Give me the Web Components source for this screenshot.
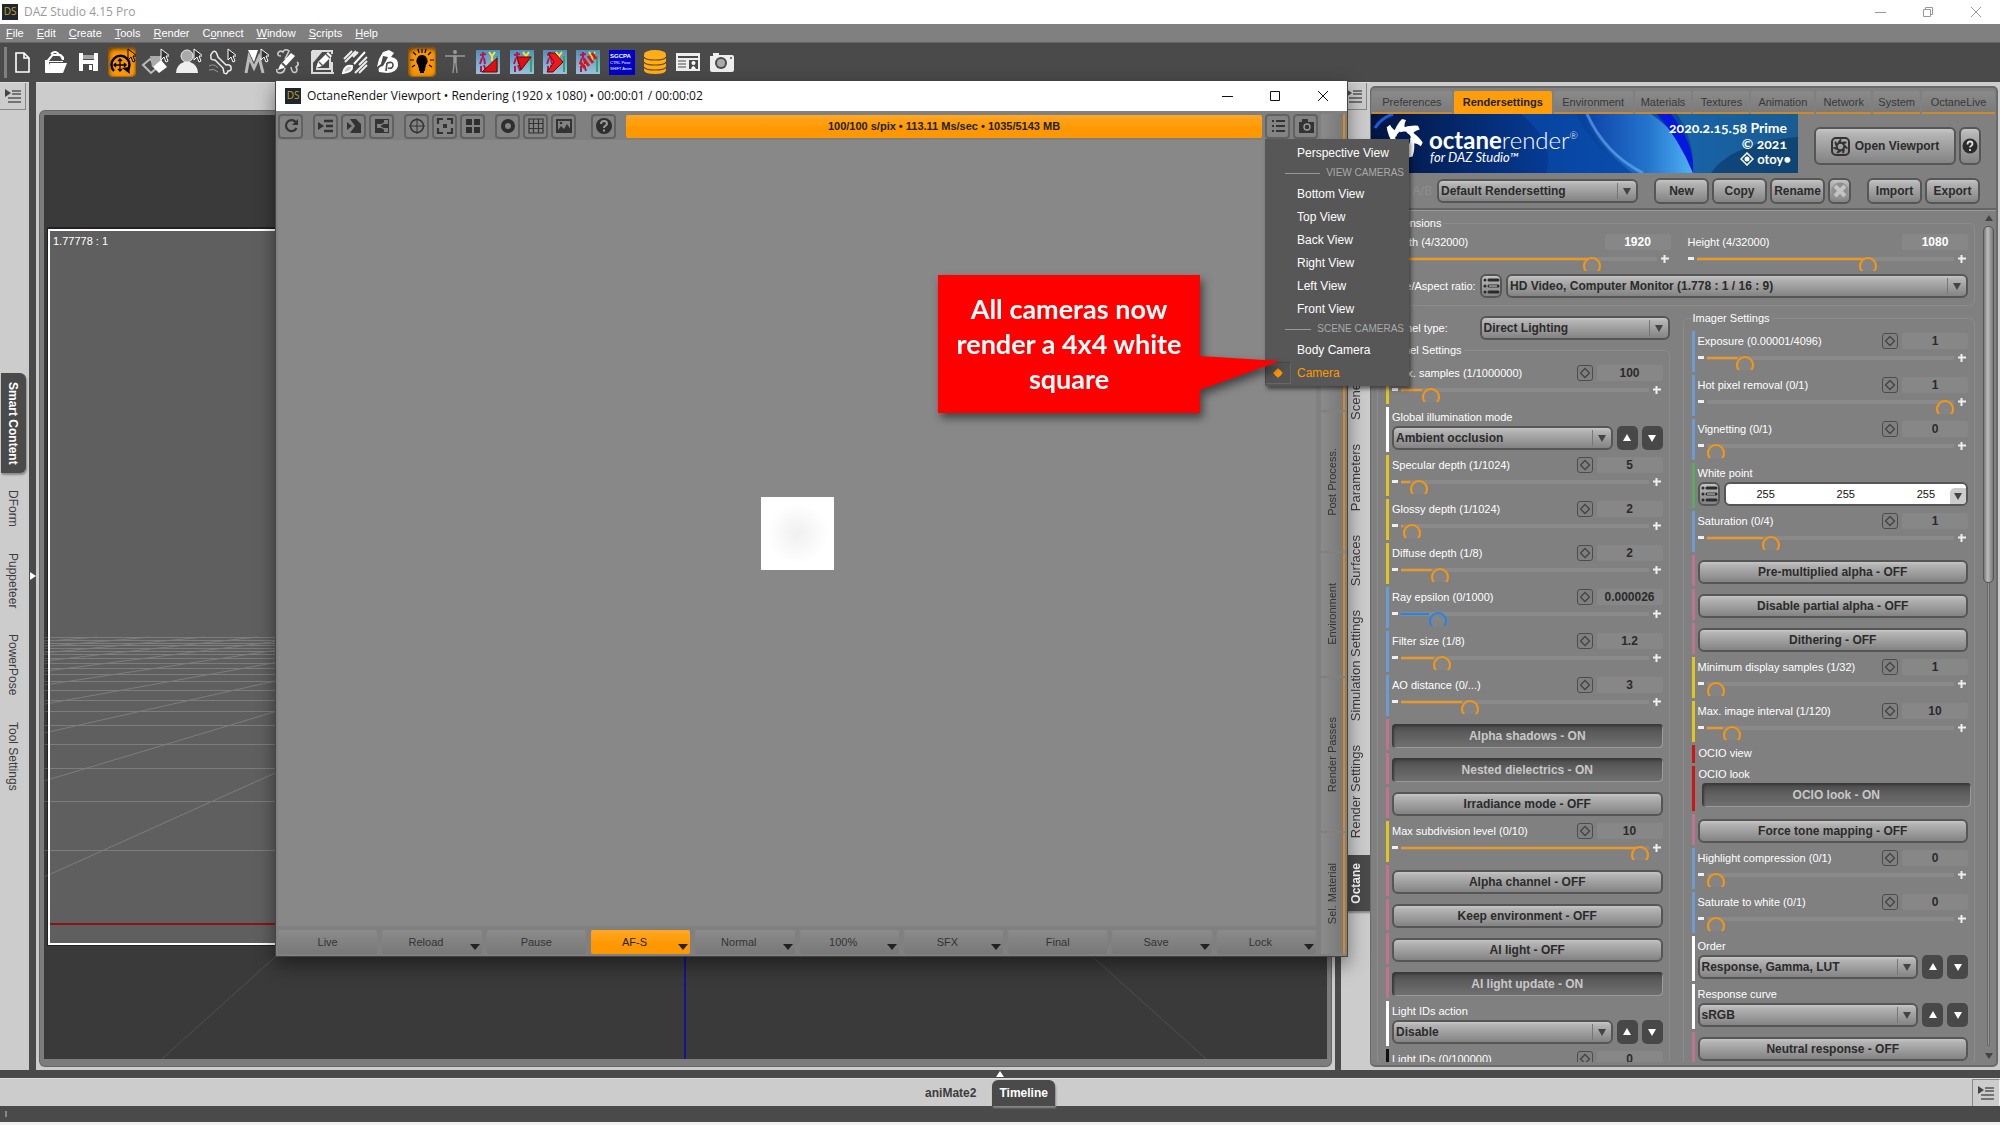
<!DOCTYPE html>
<html lang="en">
<head>
<meta charset="utf-8">
<title>DAZ Studio 4.15 Pro</title>
<style>
    html, body {
        height: 100%;
        margin: 0;
    }
    body {
        overflow: hidden;
        font-family: "Liberation Sans", Arial, sans-serif;
        font-size: 11px;
        line-height: 14px;
        color: #2b2b2b;
        background: #4a4a4a;
    }
</style>
</head>
<body>
<daz-studio></daz-studio>

<script>
// Shared rules, added to every shadow root
const BASE = `
    *, *::before, *::after { box-sizing: border-box; }
    :host([hidden]) { display: none; }
    button, input, select {
        font: inherit;
        color: inherit;
        margin: 0;
        padding: 0;
        border: 0;
        border-radius: 0;
        background: none;
        outline: none;
    }
    a { color: inherit; text-decoration: none; }
    svg { display: block; }
`;

// Raised and pressed button looks
const BUTTONS = `
    .raised {
        border: 2px solid #565656;
        border-radius: 6px;
        background: linear-gradient(#c6c6c6, #b4b4b4 15%, #838383);
        font-size: 12px;
        font-weight: bold;
        color: #2b2b2b;
    }
    .dark {
        border-radius: 5px;
        background: #484848;
        color: #fff;
    }
`;

function define(name, render, ready) {
    customElements.define(name, class extends HTMLElement {
        connectedCallback() {
            if (this.shadowRoot) return;
            this.attachShadow({ mode: 'open' });
            this.shadowRoot.innerHTML = '<style>' + BASE + '</style>' + render(this);
            if (ready) ready(this);
        }
    });
}

const svg = (w, h, body, extra = '') =>
    `<svg width="${w}" height="${h}" viewBox="0 0 ${w} ${h}" ${extra} aria-hidden="true">${body}</svg>`;

// ---------- Icons ----------

const CURSOR = '<path d="M20 1v11l3-3 2 5 2-1-2-5h4z" fill="#333" stroke="#fff" stroke-width="1"/>';
const POSE_BG = '<defs><linearGradient id="sky" x1="0" y1="0" x2="0" y2="1"><stop offset="0" stop-color="#4f8fb8"/><stop offset="1" stop-color="#9cc6df"/></linearGradient></defs><rect x="2" y="2" width="24" height="24" fill="url(#sky)"/><path d="M9 4v6M6 7l6-1M8 10l-2 6M10 10l1 6M7 18v6M10 17l2 6" stroke="#b3175a" stroke-width="2" fill="none"/><path d="M15 4l3 4 3-4M18 8v5" stroke="#f1e62a" stroke-width="2" fill="none"/><path d="M23 8v16" stroke="#2aa86a" stroke-width="2"/>';

const TOOL_ICONS = {
    'new': '<path d="M8 5h8l5 5v14H8z" fill="none" stroke="#fff" stroke-width="1.6"/><path d="M16 5v5h5" fill="none" stroke="#fff" stroke-width="1.6"/>',
    open: '<path d="M4 25V12h2l5-6h9l3 3v3h-2l-2-4h-7l-4 5v8z" fill="#fff"/><path d="M4 25l5-10h17l-4 10z" fill="#fff"/><path d="M10 6q5-5 9 2M8 14h14" stroke="#fff" stroke-width="2" fill="none"/><path d="M8 14.500h16" stroke="#4a4a4a"/>',
    save: '<path d="M5 5h19v18H5z" fill="#fff"/><path d="M9 5h11v7H9zM9 16h10v7H9z" fill="#4a4a4a"/><path d="M9 8h11M9 10h11" stroke="#fff"/><path d="M15 17h3v5h-3z" fill="#fff"/>',
    rotate: '<path d="M6 23A9 9 0 1 1 19 23" fill="none" stroke="#000" stroke-width="2.400"/><path d="M14 20l7-1 1 7z" fill="#000"/><path d="M12 12v10M7 17h10M10 13l2-2 2 2M10 21l2 2 2-2M8 15l-2 2 2 2M16 15l2 2-2 2" fill="none" stroke="#000" stroke-width="1.3"/><path d="M20 1v11l3-3 2 5 2-1-2-5h4z" fill="#f79400" stroke="#000"/>',
    surface: '<path d="M2 17l7-6 8 8-7 6z" fill="none" stroke="#bbb" stroke-width="2"/><path d="M9 8h11l2 11H11z" fill="#aaa"/><path d="M12 19l8-7 6 7-8 6z" fill="#fff"/>' + CURSOR,
    person: '<circle cx="13" cy="8" r="6" fill="#aaa" stroke="#eee"/><path d="M10 14h6q8 3 8 11H2q0-8 8-11z" fill="#eee"/>' + CURSOR,
    bone: '<path d="M4 5q3-4 5 1l1 3 8 8q4-1 5 2 1 4-3 4-1 4-4 2l-1-5-8-8q-5 0-4-3-1-2 1-4z" fill="none" stroke="#eee" stroke-width="1.5"/><path d="M1 18q5-3 9 2M1 22q5-2 9 2" fill="none" stroke="#999"/>' + CURSOR,
    joint: '<path d="M7 2h10l-4 12z" fill="#fff"/><path d="M5 25L8 9l5 11 5-11 4 16" fill="none" stroke="#bbb" stroke-width="3"/>' + CURSOR,
    geometry: '<path d="M7 8q-4 0-3-3 2-3 5-1 2-4 6-1l-4 8M3 21q-1 4 3 4t5-5M17 19q1 7 5 5 2-2 0-5 4-3 1-5" fill="none" stroke="#ccc" stroke-width="1.6"/><path d="M6 17L17 5l4 3-11 12-6 2z" fill="#fff"/><path d="M8 15l4 4" stroke="#555" stroke-width="2"/>',
    crop: '<path d="M4 3h20v3M4 3v22h22M8 21h14V9M24 14v12" fill="none" stroke="#ddd" stroke-width="2"/><path d="M8 20l2-6L20 4l4 4-10 10z" fill="#fff"/><path d="M4 3h11L4 16z" fill="#ddd"/><path d="M11 14l4 4M18 6l4 4" stroke="#555" stroke-width="1.400"/>',
    brush: '<path d="M3 11l8-8M4 14L15 3M12 9l5-5M18 25l8-8M14 25L26 13M18 17l8-8" stroke="#eee" stroke-width="2"/><path d="M13 16L24 4M2 25q2-9 9-7 1 6-9 7z" stroke="#fff" stroke-width="2" fill="#ccc"/>',
    power: '<path d="M9 4l6-2 5 3-3 4q8 1 7 9-2 7-11 7l-8-1q-2-5 4-6l3-5 2-4-5-1-2 8-4 3 2-8z" fill="#fff"/><path d="M13 15q6-2 6 2t-5 3M13 15l-1 8" fill="none" stroke="#4a4a4a" stroke-width="1.6"/>',
    light: '<path d="M14 7a6 6 0 0 0-4 10l1 4h6l1-4A6 6 0 0 0 14 7z" fill="#000"/><path d="M11 22h6M12 24h4" stroke="#000" stroke-width="2"/><path d="M14 5V1M8 7L5 4M20 7l3-3M6 12H2M22 12h4M7 17l-3 2M21 17l3 2M11 5l-1-4M17 5l1-4" stroke="#000" stroke-width="1.2"/>',
    figure: '<circle cx="14" cy="4" r="2" fill="#999"/><path d="M4 8h20M14 7v8M13 8v8l-1 9M15 8v8l1 9" stroke="#999" stroke-width="1.4" fill="none"/>',
    poseA: POSE_BG + '<path d="M23 10v14H8z" fill="#e01010" stroke="#700"/>',
    poseB: POSE_BG + '<path d="M9 9h14L13 22z" fill="#e01010" stroke="#700"/>',
    poseC: POSE_BG + '<path d="M7 5h7l8 9-10 10H6l7-10z" fill="#f01818" stroke="#700"/>',
    poseD: POSE_BG + '<path d="M6 14l5 6M10 11l5 7M14 8l5 7M18 5l4 6" stroke="#d81818" stroke-width="3"/>',
    stack: '<path d="M3 7v15q0 4 11 4t11-4V7z" fill="#ffae19"/><ellipse cx="14" cy="6" rx="11" ry="4" fill="#ffae19"/><path d="M3 9q1 3 11 3t11-3M3 14q1 3 11 3t11-3M3 19q1 3 11 3t11-3" fill="none" stroke="#6b4a10" stroke-width="1.2"/>',
    card: '<path d="M2 5h24v18H2z" fill="#eee"/><path d="M4 9h20" stroke="#4a4a4a" stroke-width="2"/><path d="M4 13h8M4 16h8M4 19h8" stroke="#4a4a4a"/><path d="M15 12h9v9h-9z" fill="#4a4a4a"/><circle cx="19.500" cy="15" r="2" fill="#fff"/><path d="M17 21q2-6 5 0z" fill="#fff"/>',
    camera: '<path d="M2 8h3V5h6v2h13q2 0 2 2v13q0 2-2 2H4q-2 0-2-2z" fill="#eee"/><circle cx="13" cy="15" r="6" fill="#4a4a4a"/><circle cx="13" cy="15" r="4" fill="#aaa"/><circle cx="23" cy="10" r="1" fill="#4a4a4a"/>'
};

const VIEW_ICONS = {
    reload: '<path d="M15 6.500A5.500 5.500 0 1 0 15.500 12" fill="none" stroke="#333" stroke-width="2.200"/><path d="M17 3v6h-6z" fill="#333"/>',
    indent: '<path d="M2 6l6 4-6 4z" fill="#333"/><path d="M8 5h9M10 10h7M8 15h9" stroke="#333" stroke-width="2.400"/>',
    tag: '<path d="M6 3h6l5 5v9H6l5-7z" fill="#333"/><path d="M3 6l5 4-5 4" fill="#333"/>',
    nodes: '<path d="M3 3h14v14H3z" fill="#333"/><path d="M14 6l-7 4 7 4" fill="none" stroke="#808080" stroke-width="1.400"/><path d="M12 4h4v4h-4zM12 12h4v4h-4zM5 8h4v4H5z" fill="#808080"/>',
    target: '<circle cx="10" cy="10" r="6.500" fill="none" stroke="#333" stroke-width="1.500"/><path d="M10 2v16M2 10h16" stroke="#333"/>',
    focus: '<path d="M8 3H3v5M12 3h5v5M3 12v5h5M17 12v5h-5" fill="none" stroke="#333" stroke-width="2.200"/><path d="M8 8h4v4H8z" fill="#333"/>',
    quad: '<path d="M3 3h6v6H3zM11 3h6v6h-6zM3 11h6v6H3zM11 11h6v6h-6z" fill="#2e2e2e"/>',
    ring: '<circle cx="10" cy="10" r="5" fill="none" stroke="#2e2e2e" stroke-width="4"/>',
    grid: '<path d="M3 3h14v14H3zM7.500 3v14M12.500 3v14M3 7.500h14M3 12.500h14" fill="none" stroke="#333" stroke-width="1.200"/>',
    image: '<path d="M3 4h14v12H3z" fill="none" stroke="#333" stroke-width="2"/><path d="M4 14l3-4 3 3 3-5 4 6v2H4z" fill="#333"/><circle cx="7" cy="7" r="1.300" fill="#333"/>',
    help: '<circle cx="10" cy="10" r="8" fill="#2e2e2e"/><path d="M7 8q0-3 3-3t3 3q0 1-2 2-1 1-1 2M10 13.500v2" fill="none" stroke="#999" stroke-width="2"/>',
    list: '<path d="M4 5h2M4 10h2M4 15h2M8 5h9M8 10h9M8 15h9" stroke="#333" stroke-width="2"/>',
    camera: '<path d="M3 6h3V3h6v3h6v11H3z" fill="#333"/><circle cx="11" cy="11" r="3" fill="none" stroke="#999" stroke-width="1.400"/>'
};

const PANE_MENU = svg(18, 18, '<path d="M1 2l6 4-6 4z" fill="#444"/><path d="M8 4h9M8 7h9M4 11h13M4 15h13" stroke="#555" stroke-width="1.400"/>');
const LIST = svg(18, 18, '<path d="M7 3h9M7 9h9M7 15h9" stroke="#2b2b2b" stroke-width="3" stroke-linecap="round"/><path d="M7 9h8" stroke="#ddd"/><circle cx="3" cy="3" r="1.500" fill="#2b2b2b"/><circle cx="3" cy="9" r="1.500" fill="#2b2b2b"/><circle cx="3" cy="15" r="1.500" fill="#2b2b2b"/>');
const UP = svg(10, 10, '<path d="M5 1l4 7H1z" fill="#fff"/>');
const DOWN = svg(10, 10, '<path d="M1 2h8L5 9z" fill="#fff"/>');

// Turbine mark: the same blade turned seven times round the hub
function turbine(size, fill) {
    let blades = '';
    for (let i = 0; i < 7; i++) {
        blades += `<path transform="rotate(${i * 360 / 7} 20 20)" d="M10 16Q13 6 19 0L23 1Q20 7 23 11Q15 11 13 18Z" fill="${fill}"/>`;
    }
    return `<svg width="${size}" height="${size}" viewBox="0 0 40 40" aria-hidden="true">${blades}</svg>`;
}

define('ds-logo', () => `
    <style>
        :host {
            display: block;
            width: 16px;
            height: 16px;
            flex: none;
            background: #1d2730;
            color: #c9a227;
            font: 10px/15px "Open Sans", sans-serif;
            text-align: center;
        }
    </style>DS`);

// ---------- Window captions ----------

define('window-caption', el => `
    <style>
        :host {
            display: flex;
            align-items: center;
            padding-left: 9px;
            background: #fff;
            color: #111;
            font: 12px/16px "Open Sans", sans-serif;
        }
        :host([main]) { padding-left: 2px; color: #999; }
        .title { flex: 1; margin-left: 6px; white-space: nowrap; }
        button { width: 48px; height: 22px; display: grid; place-items: center; }
    </style>
    <ds-logo></ds-logo>
    <span class="title"><slot></slot></span>
    <button aria-label="Minimize">${svg(12, 12, '<path d="M1 6.500h11" stroke="currentColor"/>')}</button>
    <button aria-label="Maximize">${svg(12, 12, el.hasAttribute('main')
        ? '<path d="M1.500 3.500h7v7h-7zM3.500 3V1.500h7v7H9" fill="none" stroke="currentColor"/>'
        : '<path d="M1.500 1.500h9v9h-9z" fill="none" stroke="currentColor"/>')}</button>
    <button aria-label="Close">${svg(12, 12, '<path d="M1 1l10 10M11 1L1 11" stroke="currentColor"/>')}</button>`);

// ---------- Menu bar and tool bar ----------

define('menu-bar', () => {
    const items = ['<u>F</u>ile', '<u>E</u>dit', '<u>C</u>reate', '<u>T</u>ools', '<u>R</u>ender',
        'C<u>o</u>nnect', '<u>W</u>indow', '<u>S</u>cripts', '<u>H</u>elp'];
    return `
    <style>
        :host { display: block; background: #808080; border-bottom: 1px solid #666; }
        nav { display: flex; gap: 13px; padding: 2px 6px; color: #fff; }
    </style>
    <nav>${items.map(i => `<a href="#">${i}</a>`).join('')}</nav>`;
});

define('tool-bar', () => {
    const names = ['new', 'open', 'save', 'rotate', 'surface', 'person', 'bone', 'joint', 'geometry', 'crop', 'brush',
        'power', 'light', 'figure', 'poseA', 'poseB', 'poseC', 'poseD', 'script', 'stack', 'card', 'camera'];
    const active = ['rotate', 'light'];
    let html = '';
    for (let i = 0; i < names.length; i += 3) {
        html += '<div class="group">' + names.slice(i, i + 3).map(n => `
            <button class="${active.includes(n) ? 'on' : ''}" aria-label="${n}">${n === 'script'
                ? '<span class="script"><b>SGCPA</b><br>CTRL Pose<br>SHIFT Anim</span>'
                : svg(28, 28, TOOL_ICONS[n])}</button>`).join('') + '</div>';
    }
    return `
    <style>
        :host {
            display: flex;
            align-items: center;
            gap: 6px;
            height: 39px;
            padding: 0 0 1px 4px;
            background: #4a4a4a;
        }
        .grip { width: 3px; height: 31px; margin-right: -5px; background: #808080; }
        .group { display: flex; gap: 5px; }
        button { width: 28px; height: 30px; display: grid; place-items: center; }
        .on {
            border-radius: 5px;
            background: #fa9600;
            box-shadow: inset 1px 2px 4px #5a3500, inset -1px -1px 1px #b97818;
        }
        .script {
            width: 26px;
            height: 25px;
            padding: 3px 0 0 1px;
            background: #0000c8;
            color: #fff;
            font-size: 4px;
            line-height: 6px;
            text-align: left;
            white-space: nowrap;
        }
        .script b { font-size: 6px; }
    </style>
    <div class="grip"></div>${html}`;
});

// ---------- Docking rails ----------

define('dock-rail', el => {
    const tabs = el.getAttribute('tabs').split('|');
    return `
    <style>
        :host {
            display: flex;
            flex-direction: column;
            align-items: center;
            background: #ccc;
            border-top: 1px solid #ddd;
            font-size: 12px;
            color: #3c3c3c;
        }
        .menu {
            width: 26px;
            height: 27px;
            display: grid;
            place-items: center;
            border-right: 1px solid #888;
            border-bottom: 1px solid #888;
            flex: none;
            align-self: flex-start;
        }
        .tabs { display: flex; flex-direction: column; gap: 8px; width: 100%; }
        .before { flex: 1; }
        .after { flex: 1; }
        :host([side="right"]) .before { flex: 5; }
        :host([side="right"]) .after { flex: 3; }
        .tabs button {
            display: flex;
            justify-content: center;
            width: 25px;
            padding: 9px 2px 9px 0;
            margin-left: 1px;
        }
        .tabs span { writing-mode: vertical-rl; white-space: nowrap; line-height: 16px; }
        .tabs .on { background: #4a4a4a; color: #fff; font-weight: bold; border-radius: 0 6px 6px 0; box-shadow: 1px 2px 2px #888; }
        :host([side="right"]) .tabs button { margin-left: 0; width: 100%; padding: 8px 0; font-size: 13px; }
        :host([side="right"]) .tabs span { transform: rotate(180deg); }
        :host([side="right"]) .tabs .on { border-radius: 6px 0 0 6px; font-size: 12px; }

        :host([side="left"]) .after { margin-bottom: 8px; }

        :host([side="bottom"]) { flex-direction: row-reverse; }
        :host([side="bottom"]) .menu { border: 1px solid #888; border-right-color: #eee; border-bottom: 0; align-self: center; width: 28px; }
        :host([side="bottom"]) .tabs { flex-direction: row; width: auto; align-self: flex-end; }
        :host([side="bottom"]) .tabs button { width: auto; height: 26px; padding: 5px 7px; font-size: 12px; font-weight: bold; }
        :host([side="bottom"]) .tabs span { writing-mode: horizontal-tb; }
        :host([side="bottom"]) .tabs .on { border-radius: 6px 6px 0 0; }
    </style>
    <button class="menu" aria-label="Pane options">${PANE_MENU}</button>
    <div class="before"></div>
    <div class="tabs">${tabs.map(t => `<button class="${t === el.getAttribute('active') ? 'on' : ''}"><span>${t}</span></button>`).join('')}</div>
    <div class="after"></div>`;
});

// ---------- Scene view ----------

define('scene-view', () => {
    // Perspective floor: lines meet at (640, 474), the far edge is at y 522
    const vx = 640, vy = 474, far = 522;
    let lines = '';
    for (let n = 1; n <= 16; n++) {
        const run = (far - vy) * n / 0.9;
        const reach = 640 * n / 0.9;
        lines += `<path d="M${vx - run} ${far}L${vx - reach} ${vy + 640}M${vx + run} ${far}L${vx + reach} ${vy + 640}"/>`;
    }
    [522, 525, 528, 530, 533, 536, 539, 543, 548, 553, 559, 566, 575, 585, 596, 610, 629, 653, 686, 735].forEach(y => {
        lines += `<path d="M0 ${y + 0.5}H1284"/>`;
    });
    return `
    <style>
        :host { display: block; padding: 28px 4px 4px; background: #ccc; border-top: 1px solid #ddd; min-width: 0; }
        .frame {
            height: 100%;
            border: 4px solid #7c7c7c;
            border-bottom-width: 7px;
            border-radius: 5px;
            background: #3a3a3a;
            overflow: hidden;
            position: relative;
            box-shadow: 0 0 0 1px #666;
        }
        .floor { position: absolute; inset: 0; }
        .ratio { position: absolute; left: 9px; top: 119px; color: #fff; }
    </style>
    <div class="frame">
        <svg class="floor" width="1284" height="945" viewBox="0 0 1284 945">
            <clipPath id="gate"><rect x="5" y="115" width="1270" height="714"/></clipPath>
            <rect x="3" y="112" width="1276" height="719" fill="#222"/>
            <g fill="none" stroke="#505050">${lines}</g>
            <rect x="5" y="115" width="1270" height="714" fill="#5f5f5f"/>
            <g fill="none" stroke="#7d7d7d" clip-path="url(#gate)">${lines}</g>
            <rect x="5" y="115" width="1270" height="714" fill="none" stroke="#fff" stroke-width="2"/>
            <path d="M6 809H1274" stroke="#8c1414" stroke-width="2"/>
            <path d="M641 809V945" stroke="#151590" stroke-width="2"/>
        </svg>
        <span class="ratio">1.77778 : 1</span>
    </div>`;
});

// ---------- Render viewport window ----------

define('camera-menu', () => `
    <style>
        :host {
            display: block;
            width: 144px;
            padding: 2px 0;
            background: #575757;
            box-shadow: 2px 3px 4px rgba(0, 0, 0, 0.5);
            color: #fff;
            font-size: 12px;
        }
        button { display: grid; grid-template-columns: 26px 1fr; column-gap: 6px; width: 100%; height: 23px; align-items: center; text-align: left; }
        .sep { display: flex; align-items: center; gap: 6px; padding: 0 5px 0 20px; height: 18px; font-size: 10px; color: #aaa; white-space: nowrap; }
        .sep::before { content: ""; flex: 1; height: 1px; background: #999; }
        .on { color: #ff9800; }
        .mark { height: 22px; display: grid; place-items: center; }
        .on .mark { border: 1px solid #484848; background: #535353; border-right-color: #666; border-bottom-color: #666; }
    </style>
    ${['Perspective View', '-VIEW CAMERAS', 'Bottom View', 'Top View', 'Back View', 'Right View', 'Left View', 'Front View',
        '-SCENE CAMERAS', 'Body Camera', 'Camera'].map(t => t[0] === '-'
        ? `<div class="sep">${t.slice(1)}</div>`
        : `<button class="${t === 'Camera' ? 'on' : ''}"><span class="mark">${t === 'Camera'
            ? svg(10, 10, '<path d="M5 0Q7 3 10 5Q7 7 5 10Q3 7 0 5Q3 3 5 0z" fill="#ff9800"/><circle cx="5" cy="5" r="3.500" fill="#ff9800"/>')
            : ''}</span>${t}</button>`).join('')}`);

define('call-out', () => `
    <style>
        :host { display: block; width: 262px; filter: drop-shadow(3px 5px 4px rgba(0, 0, 0, 0.5)); }
        .box {
            position: relative;
            display: grid;
            place-items: center;
            height: 138px;
            padding: 0 14px 2px;
            background: #f00;
            color: #fff;
            font: bold 27px/35px Lato, sans-serif;
            text-align: center;
        }
        svg { position: absolute; left: 100%; top: 81px; }
    </style>
    <div class="box"><span><slot></slot></span>${svg(80, 34, '<path d="M0 0L80 5L0 34z" fill="#f00"/>')}</div>`);

define('render-window', () => {
    const groups = [['reload'], ['indent', 'tag', 'nodes'], ['target', 'focus', 'quad'], ['ring', 'grid', 'image']];
    const button = n => `<button class="tool" aria-label="${n}">${svg(20, 20, VIEW_ICONS[n])}</button>`;
    const actions = ['Live', 'Reload*', 'Pause', 'AF-S*', 'Normal*', '100%*', 'SFX*', 'Final', 'Save*', 'Lock*'];
    return `
    <style>
        :host {
            display: flex;
            flex-direction: column;
            border: 1px solid #444;
            background: #808080;
            box-shadow: 0 8px 18px rgba(0, 0, 0, 0.45);
        }
        window-caption { height: 30px; flex: none; }
        .bar { display: flex; align-items: center; gap: 10px; padding: 1px 29px 0 2px; height: 29px; }
        .group { display: flex; gap: 3px; }
        .tool {
            width: 25px;
            height: 25px;
            display: grid;
            place-items: center;
            border: 2px solid #626262;
            border-radius: 4px;
            background: #838383;
        }
        .help { margin-left: 5px; }
        .progress {
            flex: 1;
            height: 23px;
            display: grid;
            place-items: center;
            border-radius: 2px;
            background: linear-gradient(#ffa726, #ff9800 60%);
            font-weight: bold;
            color: #222;
        }
        .end { margin-left: -7px; }
        .main { flex: 1; display: grid; grid-template-columns: 1fr 24px; gap: 5px; padding: 0 2px 2px; min-height: 0; }
        .left { display: flex; flex-direction: column; gap: 4px; }
        .render { flex: 1; display: grid; place-items: center; background: #888; }
        .square { width: 73px; height: 73px; background: radial-gradient(closest-side, #f0f0f0, #fff 85%); }
        .actions { display: grid; grid-template-columns: repeat(10, 1fr); gap: 5px; }
        .actions button {
            position: relative;
            height: 24px;
            border-radius: 2px;
            background: linear-gradient(#8b8b8b, #787878);
            color: #333;
        }
        .actions .on { background: linear-gradient(#ffa726, #ff9800 60%); color: #222; }
        .more::after {
            content: "";
            position: absolute;
            right: 2px;
            bottom: 4px;
            border: 5px solid transparent;
            border-top: 6px solid #222;
            border-bottom: 0;
        }
        .actions .more { padding-right: 12px; }
        .sidetabs { display: grid; grid-template-rows: 150fr 147fr 140fr 124fr 155fr 122fr; gap: 2px; margin-top: -26px; }
        .sidetabs button {
            display: grid;
            place-items: center;
            border-right: 2px solid #d68a1c;
            background: linear-gradient(90deg, #8b8b8b, #797979);
            color: #333;
        }
        .sidetabs span { writing-mode: vertical-rl; transform: rotate(180deg); }
        camera-menu { position: absolute; right: -62px; top: 58px; }
        call-out { position: absolute; right: 147px; top: 194px; }
    </style>
    <window-caption>OctaneRender Viewport • Rendering (1920 x 1080) • 00:00:01 / 00:00:02</window-caption>
    <div class="bar">
        ${groups.map(g => `<div class="group">${g.map(button).join('')}</div>`).join('')}
        <div class="group help">${button('help')}</div>
        <div class="progress">100/100 s/pix • 113.11 Ms/sec • 1035/5143 MB</div>
        <div class="group end">${button('list')}${button('camera')}</div>
    </div>
    <div class="main">
        <div class="left">
            <div class="render"><div class="square"></div></div>
            <div class="actions">${actions.map(a => `<button class="${a.endsWith('*') ? 'more' : ''} ${a === 'AF-S*' ? 'on' : ''}">${a.replace('*', '')}</button>`).join('')}</div>
        </div>
        <div class="sidetabs">${['', '', 'Post Process.', 'Environment', 'Render Passes', 'Sel. Material'].map(t => `<button><span>${t}</span></button>`).join('')}</div>
    </div>
    <camera-menu></camera-menu>
    <call-out>All cameras now render a 4x4 white square</call-out>`;
});

// ---------- Parameter rows ----------

define('param-slider', el => {
    const pos = Number(el.getAttribute('pos') || 0);
    const fill = el.hasAttribute('nofill') ? 0 : pos;
    return `
    <style>
        :host { display: block; height: 41px; border-left: 3px solid var(--bar, transparent); padding: 2px 0 0 3px; --knob: #f7960f; }
        :host([plain]) { border: 0; padding-left: 0; }
        :host([blue]) { --knob: #2284f0; }
        .top { display: flex; align-items: center; height: 16px; gap: 4px; }
        label { flex: 1; color: #fff; white-space: nowrap; }
        .diamond { width: 16px; height: 16px; border: 1px solid #4c4c4c; border-radius: 3px; display: grid; place-items: center; }
        :host([plain]) .diamond { display: none; }
        .value { width: 66px; height: 16px; border-radius: 2px; background: #878787; text-align: center; font-weight: bold; font-size: 12px; }
        :host([plain]) .value { color: #fff; }
        .line { display: flex; gap: 3px; margin-top: 7px; height: 14px; padding-right: 2px; }
        .step { width: 6px; height: 10px; margin-top: -4px; flex: none; color: #fff; display: grid; place-items: center; }
        .plus { width: 9px; }
        .track { flex: 1; overflow: hidden; height: 14px; }
        input[type=range] {
            -webkit-appearance: none;
            appearance: none;
            display: block;
            width: 100%;
            height: 18px;
        }
        input[type=range]::-webkit-slider-runnable-track {
            height: 18px;
            background:
                linear-gradient(var(--knob), var(--knob)) 0 1px / ${fill * 95}% 2px no-repeat,
                linear-gradient(#8a8a8a, #8a8a8a) 0 0 / 100% 4px no-repeat;
        }
        input[type=range]::-webkit-slider-thumb {
            -webkit-appearance: none;
            width: 18px;
            height: 18px;
            border: 2px solid var(--knob);
            border-radius: 50%;
            background: #848484;
        }
    </style>
    <div class="top">
        <label for="value">${el.getAttribute('label')}</label>
        <button class="diamond" aria-label="Options">${svg(12, 12, '<path d="M6 1.500l4.500 4.500L6 10.500 1.500 6z" fill="none" stroke="#444" stroke-width="1.300"/>')}</button>
        <input class="value" id="value" type="text" value="${el.getAttribute('value')}">
    </div>
    <div class="line">
        <button class="step" aria-label="Decrease">${svg(6, 4, '<path d="M0 1h6v3H0z" fill="#eee"/>')}</button>
        <div class="track"><input type="range" aria-label="${el.getAttribute('label')}" min="0" max="1" step="any" value="${pos}"></div>
        <button class="step plus" aria-label="Increase">${svg(9, 9, '<path d="M4.500 1v8M1 4.500h8" stroke="#eee" stroke-width="2"/>')}</button>
    </div>`;
});

define('param-toggle', el => {
    const on = el.hasAttribute('on');
    return `
    <style>${BUTTONS}
        :host { display: block; height: 31px; border-left: 3px solid var(--bar, #bf7391); padding: 5px 0 0 3px; }
        :host([titled]) { height: 45px; padding: 1px 0 0 4px; }
        button { display: block; width: 100%; height: 24px; }
        .title { color: #fff; height: 16px; line-height: 14px; }
        :host([titled]) button { margin-left: 3px; }
        .pressed {
            border-radius: 4px;
            background: linear-gradient(#464646, #5b5b5b 35%, #717171);
            box-shadow: inset 2px 2px 2px #3a3a3a, inset -1px -1px 0 #9a9a9a;
            font-size: 12px;
            font-weight: bold;
            color: #c8c8c8;
        }
    </style>
    ${el.hasAttribute('titled') ? `<div class="title">${el.getAttribute('label')}</div>` : ''}
    <button class="${on ? 'pressed' : 'raised'}" aria-pressed="${on}">${el.getAttribute('label')} - ${on ? 'ON' : 'OFF'}</button>`;
});

define('combo-box', el => `
    <style>${BUTTONS}
        :host { display: block; position: relative; min-width: 0; }
        select { -webkit-appearance: none; appearance: none; display: block; width: 100%; height: 24px; padding: 0 24px 0 2px; }
        svg { position: absolute; right: 5px; top: 4px; pointer-events: none; }
    </style>
    <select class="raised" aria-label="${el.getAttribute('label')}"><option>${el.getAttribute('value')}</option></select>
    ${svg(16, 16, '<path d="M0.500 0v16" stroke="#777"/><path d="M6 5h8l-4 7z" fill="#444"/>')}`);

define('param-select', el => `
    <style>${BUTTONS}
        :host { display: block; height: 45px; border-left: 3px solid var(--bar, #fff); padding: 3px 0 0 3px; }
        .title { height: 16px; color: #fff; }
        .row { display: flex; gap: 4px; }
        combo-box { flex: 1; }
        .dark { width: 21px; height: 24px; display: grid; place-items: center; }
    </style>
    <div class="title">${el.getAttribute('label')}</div>
    <div class="row">
        <combo-box label="${el.getAttribute('label')}" value="${el.getAttribute('value')}"></combo-box>
        <button class="dark" aria-label="Previous">${UP}</button>
        <button class="dark" aria-label="Next">${DOWN}</button>
    </div>`);

define('param-color', el => `
    <style>${BUTTONS}
        :host { display: block; height: 45px; border-left: 3px solid #5fa763; padding: 3px 0 0 3px; }
        .title { height: 16px; color: #fff; }
        .row { display: flex; gap: 4px; }
        .list { width: 22px; height: 24px; display: grid; place-items: center; }
        .box {
            position: relative;
            flex: 1;
            display: grid;
            grid-template-columns: repeat(3, 1fr);
            height: 24px;
            border: 2px solid #565656;
            border-radius: 6px;
            background: #fff;
            overflow: hidden;
        }
        input { width: 100%; text-align: center; color: #111; min-width: 0; }
        .more { position: absolute; right: 0; bottom: 0; width: 16px; height: 16px; display: grid; place-items: center; border-top-left-radius: 5px; background: #ccc; }
    </style>
    <div class="title">${el.getAttribute('label')}</div>
    <div class="row">
        <button class="raised list" aria-label="Presets">${LIST}</button>
        <div class="box">
            ${el.getAttribute('value').split(' ').map((v, i) => `<input type="text" aria-label="${'RGB'[i]}" value="${v}">`).join('')}
            <button class="more" aria-label="Choose colour">${svg(10, 10, '<path d="M1 2h8L5 9z" fill="#444"/>')}</button>
        </div>
    </div>`);

define('param-note', el => `
    <style>
        :host { display: block; height: 18px; border-left: 3px solid var(--bar); padding: 1px 0 0 4px; color: #fff; }
    </style>${el.getAttribute('label')}`);

define('param-group', el => `
    <style>
        :host { display: block; min-width: 0; }
        fieldset { min-width: 0; margin: 0; padding: 6px 6px 8px 8px; border: 1px solid #8b8b8b; border-radius: 5px; }
        :host([wide]) fieldset { padding: 2px 6px 7px 12px; }
        legend { padding: 0 2px; color: #fff; line-height: 14px; margin-left: -1px; }
        :host([wide]) legend { margin-left: -8px; }
        .rows { display: flex; flex-direction: column; gap: 3px; }
        :host([wide]) .rows { gap: 1px; }
    </style>
    <fieldset><legend>${el.getAttribute('label')}</legend><div class="rows"><slot></slot></div></fieldset>`);

// ---------- Octane panel ----------

define('octane-banner', () => `
    <style>
        :host {
            position: relative;
            display: flex;
            width: 427px;
            height: 59px;
            overflow: hidden;
            color: #fff;
            background: #04215c;
            font-family: Lato, sans-serif;
        }
        .art { position: absolute; inset: 0; }
        .mark { position: relative; margin: 5px 0 0 12px; }
        .name { position: relative; margin-left: 6px; padding-top: 14px; font-size: 24px; line-height: 24px; font-weight: 300; white-space: nowrap; }
        .name b { font-weight: 700; }
        .name sup { font-size: 10px; line-height: 0; vertical-align: 10px; }
        .name div { font: italic 13px/16px Lato, sans-serif; padding-left: 1px; margin-top: -3px; }
        .info { position: relative; margin-left: auto; padding: 6px 11px 0 0; text-align: right; font-size: 14px; line-height: 16px; font-weight: bold; font-variant-numeric: oldstyle-nums; }
        .otoy { display: flex; align-items: center; justify-content: flex-end; gap: 3px; margin-right: -4px; font-size: 13px; line-height: 14px; }
    </style>
    <svg class="art" width="427" height="59" viewBox="0 0 427 59" aria-hidden="true">
        <defs>
            <linearGradient id="sea"><stop offset="0" stop-color="#021440"/><stop offset="0.4" stop-color="#063a92"/><stop offset="0.62" stop-color="#0a4fa8"/><stop offset="1" stop-color="#0a3e6e"/></linearGradient>
            <linearGradient id="beam"><stop offset="0" stop-color="#0b3fa5"/><stop offset="0.6" stop-color="#2474cc"/><stop offset="1" stop-color="#4fb2f5"/></linearGradient>
        </defs>
        <path d="M0 0h427v59H0z" fill="url(#sea)"/>
        <path d="M150 0h55q20 40 60 59h-90q10-30-25-59z" fill="#0a4cae" opacity="0.6"/>
        <path d="M210 0h70q36 25 42 59h-60q-30-20-52-59z" fill="url(#beam)"/>
        <path d="M216 0q18 40 56 59" stroke="#7cc8ff" stroke-width="3" fill="none" opacity="0.5"/>
        <path d="M286 0h14q24 30 22 59-14-34-36-59z" fill="#0618e0"/>
        <path d="M306 0h121v59H322q2-32-16-59z" fill="#2a80bd" opacity="0.45"/>
        <path d="M340 59q20-30 87-36v36z" fill="#0a3560" opacity="0.6"/>
        <path d="M4 14Q10 4 22 0" stroke="#1a5ce0" stroke-width="3" fill="none"/>
    </svg>
    <div class="mark">${turbine(40, '#fff')}</div>
    <div class="name"><b>octane</b>render<sup>®</sup><div>for DAZ Studio™</div></div>
    <div class="info">2020.2.15.58 Prime<br>© 2021<div class="otoy">${svg(14, 14, '<path d="M7 1l6 6-6 6-6-6z" fill="none" stroke="#fff" stroke-width="1.500"/><circle cx="7" cy="7" r="2.500" fill="#fff"/>')}otoy•</div></div>`);

define('octane-panel', () => {
    const tabs = ['Preferences', 'Rendersettings', 'Environment', 'Materials', 'Textures', 'Animation', 'Network', 'System', 'OctaneLive'];
    const slider = (label, value, pos, color, extra = '') =>
        `<param-slider label="${label}" value="${value}" pos="${pos}" style="--bar:${color}" ${extra}></param-slider>`;
    const yellow = '#e2c51f', blue = '#6d9bd6', red = '#cc1616';
    return `
    <style>${BUTTONS}
        :host {
            display: flex;
            flex-direction: column;
            min-width: 0;
            border: 2px solid #6a6a6a;
            border-left-width: 1px;
            border-radius: 5px;
            background: #808080;
            overflow: hidden;
        }
        nav { display: grid; grid-template-columns: 80fr 98fr 79fr 57fr 56fr 63fr 55fr 47fr 73fr; gap: 2px; padding: 3px 1px 0; }
        nav button {
            height: 23px;
            border-bottom: 2px solid #c98a2c;
            border-radius: 2px 2px 0 0;
            background: linear-gradient(#8a8a8a, #7b7b7b);
            color: #383838;
            white-space: nowrap;
        }
        nav .on { background: #ff9d0a; border-color: #ff9d0a; color: #222; font-weight: bold; }
        .head { display: flex; align-items: center; }
        .head .raised { height: 38px; margin-top: 5px; display: flex; align-items: center; justify-content: center; gap: 5px; }
        .head .open { width: 142px; margin-left: 16px; margin-right: 3px; }
        .ask { width: 22px; }
        .badge { display: grid; place-items: center; width: 19px; height: 19px; border: 2px solid #333; border-radius: 5px; }
        .presets { display: flex; align-items: center; gap: 3px; height: 37px; padding: 0 16px 0 40px; border-bottom: 2px solid #666; }
        .presets .raised { width: 55px; height: 26px; flex: none; }
        .presets .remove { width: 23px; display: grid; place-items: center; }
        .ab { width: 23px; color: #8e8e8e; font-size: 12px; }
        .presets combo-box { flex: 1; margin-right: 13px; }
        .presets .import { margin-left: 13px; }
        .body { flex: 1; display: flex; min-height: 0; overflow: hidden; border-top: 1px solid #999; margin-bottom: 3px; }
        .params { flex: 1; padding: 5px 0 0 6px; min-width: 0; }
        .pair { display: grid; grid-template-columns: 1fr 1fr; gap: 17px; }
        .aspect { display: flex; align-items: center; gap: 4px; color: #fff; white-space: nowrap; }
        .aspect span { width: 86px; }
        .aspect .raised { width: 22px; height: 24px; display: grid; place-items: center; }
        .aspect combo-box { flex: 1; }
        .cols { display: grid; grid-template-columns: 1fr 1fr; gap: 13px; margin-top: 5px; }
        .kernel { display: flex; align-items: center; justify-content: space-between; height: 32px; padding: 2px 0 0 12px; color: #fff; }
        .kernel combo-box { width: 190px; }
        .scroll { width: 21px; display: flex; flex-direction: column; align-items: center; padding: 4px 0 0 6px; }
        .thumb { width: 11px; flex: 355; margin-top: 5px; border: 1px solid #555; border-radius: 5px; background: linear-gradient(90deg, #777, #bbb 40%, #777); }
        .rest { width: 3px; flex: 462; border: 1px solid #666; border-top: 0; background: #999; margin-bottom: 7px; }
        .scroll svg:last-child { margin-bottom: 3px; }
    </style>
    <nav>${tabs.map(t => `<button class="${t === 'Rendersettings' ? 'on' : ''}">${t}</button>`).join('')}</nav>
    <div class="head">
        <octane-banner></octane-banner>
        <button class="raised open"><span class="badge">${turbine(15, '#333')}</span>Open Viewport</button>
        <button class="raised ask" aria-label="Help">${svg(18, 18, '<circle cx="9" cy="9" r="7.500" fill="#2b2b2b"/><path d="M6.500 7.500q0-3 2.500-3t2.500 2.500q0 1-1.500 2-1 .5-1 1.500M9 12v2" fill="none" stroke="#ddd" stroke-width="1.800"/>')}</button>
    </div>
    <div class="presets">
        <button class="ab" disabled>A/B</button>
        <combo-box label="Preset" value="Default Rendersetting"></combo-box>
        <button class="raised">New</button>
        <button class="raised">Copy</button>
        <button class="raised">Rename</button>
        <button class="raised remove" aria-label="Delete">${svg(18, 18, '<circle cx="9" cy="9" r="8.500" fill="#909090"/><path d="M4 4l10 10M14 4L4 14" stroke="#c4c4c4" stroke-width="4"/>')}</button>
        <button class="raised import">Import</button>
        <button class="raised">Export</button>
    </div>
    <div class="body">
        <div class="params">
            <param-group wide label="Dimensions">
                <div class="pair">
                    ${slider('Width (4/32000)', '1920', 0.77, 'none', 'plain')}
                    ${slider('Height (4/32000)', '1080', 0.68, 'none', 'plain')}
                </div>
                <div class="aspect">
                    <span>Size/Aspect ratio:</span>
                    <button class="raised" aria-label="Sizes">${LIST}</button>
                    <combo-box label="Aspect ratio" value="HD Video, Computer Monitor (1.778 : 1 / 16 : 9)"></combo-box>
                </div>
            </param-group>
            <div class="cols">
                <div>
                    <div class="kernel"><span>Kernel type:</span><combo-box label="Kernel type" value="Direct Lighting"></combo-box></div>
                    <param-group label="Kernel Settings">
                        ${slider('Max. samples (1/1000000)', '100', 0.09, yellow)}
                        <param-select label="Global illumination mode" value="Ambient occlusion"></param-select>
                        ${slider('Specular depth (1/1024)', '5', 0.04, yellow)}
                        ${slider('Glossy depth (1/1024)', '2', 0.01, yellow)}
                        ${slider('Diffuse depth (1/8)', '2', 0.13, yellow)}
                        ${slider('Ray epsilon (0/1000)', '0.000026', 0.12, blue, 'blue')}
                        ${slider('Filter size (1/8)', '1.2', 0.14, blue)}
                        ${slider('AO distance (0/...)', '3', 0.26, blue)}
                        <param-toggle label="Alpha shadows" on></param-toggle>
                        <param-toggle label="Nested dielectrics" on></param-toggle>
                        <param-toggle label="Irradiance mode"></param-toggle>
                        ${slider('Max subdivision level (0/10)', '10', 1, yellow)}
                        <param-toggle label="Alpha channel"></param-toggle>
                        <param-toggle label="Keep environment"></param-toggle>
                        <param-toggle label="AI light"></param-toggle>
                        <param-toggle label="AI light update" on></param-toggle>
                        <param-select label="Light IDs action" value="Disable"></param-select>
                        ${slider('Light IDs (0/100000)', '0', 0, '#111')}
                    </param-group>
                </div>
                <param-group label="Imager Settings">
                    ${slider('Exposure (0.00001/4096)', '1', 0.13, blue)}
                    ${slider('Hot pixel removal (0/1)', '1', 1, blue, 'nofill')}
                    ${slider('Vignetting (0/1)', '0', 0, blue)}
                    <param-color label="White point" value="255 255 255"></param-color>
                    ${slider('Saturation (0/4)', '1', 0.24, blue)}
                    <param-toggle label="Pre-multiplied alpha"></param-toggle>
                    <param-toggle label="Disable partial alpha"></param-toggle>
                    <param-toggle label="Dithering"></param-toggle>
                    ${slider('Minimum display samples (1/32)', '1', 0, yellow)}
                    ${slider('Max. image interval (1/120)', '10', 0.07, yellow)}
                    <param-note label="OCIO view" style="--bar:${red}"></param-note>
                    <param-toggle label="OCIO look" on titled style="--bar:${red}"></param-toggle>
                    <param-toggle label="Force tone mapping"></param-toggle>
                    ${slider('Highlight compression (0/1)', '0', 0, blue)}
                    ${slider('Saturate to white (0/1)', '0', 0, blue)}
                    <param-select label="Order" value="Response, Gamma, LUT"></param-select>
                    <param-select label="Response curve" value="sRGB"></param-select>
                    <param-toggle label="Neutral response"></param-toggle>
                </param-group>
            </div>
        </div>
        <div class="scroll">
            ${svg(8, 6, '<path d="M4 0l4 6H0z" fill="#444"/>')}
            <div class="thumb"></div><div class="rest"></div>
            ${svg(8, 6, '<path d="M0 0h8L4 6z" fill="#444"/>')}
        </div>
    </div>`;
});

// ---------- Whole application ----------

define('daz-studio', () => `
    <style>
        :host {
            position: relative;
            display: grid;
            grid-template-rows: 24px 19px 39px 1fr 28px 19px;
            height: 100vh;
            background: #4a4a4a;
        }
        .work { display: grid; grid-template-columns: 29px 7px 1fr 6px 659px; min-height: 0; margin-bottom: 8px; position: relative; }
        .handle { display: grid; place-items: center; }
        .right { display: grid; grid-template-columns: 29px 1fr; background: #ccc; min-height: 0; }
        octane-panel { margin: 4px 2px 3px 0; min-height: 0; }
        .up { position: absolute; left: calc(50% - 4px); bottom: -7px; }
        .status { border-bottom: 3px solid #f0f0f0; padding: 5px; }
        .status::before { content: ""; display: block; width: 2px; height: 6px; background: #888; }
        render-window { position: absolute; left: 275px; right: 652px; top: 80px; bottom: 168px; }
    </style>
    <window-caption main>DAZ Studio 4.15 Pro</window-caption>
    <menu-bar></menu-bar>
    <tool-bar></tool-bar>
    <div class="work">
        <dock-rail side="left" tabs="Smart Content|DForm|Puppeteer|PowerPose|Tool Settings" active="Smart Content"></dock-rail>
        <div class="handle">${svg(7, 8, '<path d="M1 0l6 4-6 4z" fill="#fff"/>')}</div>
        <scene-view></scene-view>
        <div></div>
        <div class="right">
            <dock-rail side="right" tabs="Scene|Parameters|Surfaces|Simulation Settings|Render Settings|Octane" active="Octane"></dock-rail>
            <octane-panel></octane-panel>
        </div>
        <div class="up">${svg(8, 6, '<path d="M4 0l4 6H0z" fill="#fff"/>')}</div>
    </div>
    <dock-rail side="bottom" tabs="aniMate2|Timeline" active="Timeline"></dock-rail>
    <div class="status"></div>
    <render-window></render-window>`);
</script>
</body>
</html>
